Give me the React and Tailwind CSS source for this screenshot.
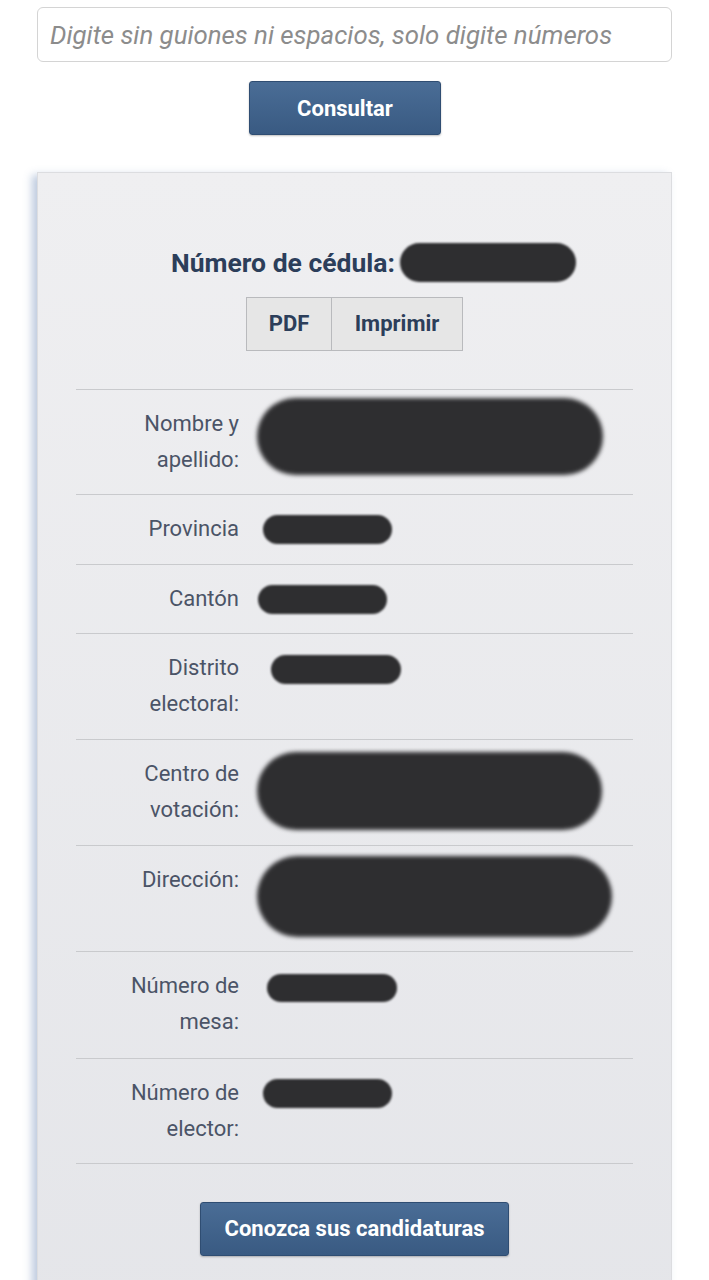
import React from 'react';

const rows = [
  { label: ['Nombre y', 'apellido:'], pb: 'pb-[16px]', blob: 'ml-[18px] w-[346px] h-[77px] -mt-[8px] blur-[2px]' },
  { label: ['Provincia'], pb: 'pb-[17px]', blob: 'ml-[24px] w-[129px] h-[29px] mt-[4px] blur-[1px]' },
  { label: ['Cantón'], pb: 'pb-[16px]', blob: 'ml-[19px] w-[129px] h-[29px] mt-[4px] blur-[1px]' },
  { label: ['Distrito', 'electoral:'], pb: 'pb-[17px]', blob: 'ml-[32px] w-[130px] h-[29px] mt-[5px] blur-[1px]' },
  { label: ['Centro de', 'votación:'], pb: 'pb-[17px]', blob: 'ml-[18px] w-[345px] h-[78px] -mt-[4px] -mb-[2px] blur-[2px]' },
  { label: ['Dirección:'], pb: 'pb-[17px]', blob: 'ml-[18px] w-[355px] h-[81px] -mt-[6px] -mb-[3px] blur-[2px]' },
  { label: ['Número de', 'mesa:'], pb: 'pb-[18px]', blob: 'ml-[28px] w-[130px] h-[28px] mt-[6px] blur-[1px]' },
  { label: ['Número de', 'elector:'], pb: 'pb-[16px]', blob: 'ml-[24px] w-[129px] h-[29px] mt-[4px] blur-[1px]' },
];

const btn =
  'h-[54px] rounded-[3px] border border-[#2f4d72] bg-gradient-to-b from-[#4a6d96] to-[#395a82] text-white font-bold text-[22px] shadow-[0_1px_2px_rgba(0,0,0,0.25)]';

export default function App() {
  return (
    <div className="w-[709px] h-[1280px] overflow-hidden bg-white font-['Roboto',sans-serif]">
      {/* Search input */}
      <div className="pt-[7px] px-[37px]">
        <input
          type="text"
          placeholder="Digite sin guiones ni espacios, solo digite números"
          className="w-full h-[55px] rounded-[6px] border border-[#d4d4d4] px-[12px] text-[25.8px] italic placeholder:text-[#8c8c8c] outline-none"
        />
      </div>

      <div className="flex justify-center mt-[19px] pr-[19px]">
        <button className={`${btn} w-[192px]`}>Consultar</button>
      </div>

      {/* Result card */}
      <div className="mt-[37px] ml-[37px] w-[635px] h-[1200px] border border-[#dcdde0] bg-gradient-to-b from-[#efeff1] to-[#e4e5e9] shadow-[-5px_3px_8px_rgba(110,140,185,0.45)] px-[38px]">
        <div className="flex items-center justify-center pt-[70px] pl-[38px] text-[#2c3e5a] font-bold text-[26.5px]">
          <span>Número de cédula:</span>
          <span className="ml-[5px] w-[176px] h-[39px] rounded-full bg-[#2e2e30] blur-[1px]" />
        </div>

        <div className="flex justify-center mt-[14px]">
          <div className="flex border border-[#b9babd] bg-[#e6e6e6] text-[#2c3e5a] font-bold text-[22px]">
            <button className="w-[85px] h-[52px] border-r border-[#b9babd]">PDF</button>
            <button className="w-[130px] h-[52px]">Imprimir</button>
          </div>
        </div>

        <div className="mt-[38px] border-t border-[#c9cacd]">
          {rows.map((r, i) => (
            <div key={i} className={`flex border-b border-[#c9cacd] pt-[16px] ${r.pb}`}>
              <div className="w-[163px] shrink-0 text-right text-[22px] leading-[36px] text-[#4b5467]">
                {r.label.map((l) => (
                  <div key={l}>{l}</div>
                ))}
              </div>
              <div className={`${r.blob} rounded-full bg-[#2e2e30]`} />
            </div>
          ))}
        </div>

        <div className="flex justify-center mt-[38px]">
          <button className={`${btn} w-[309px]`}>Conozca sus candidaturas</button>
        </div>
      </div>
    </div>
  );
}
